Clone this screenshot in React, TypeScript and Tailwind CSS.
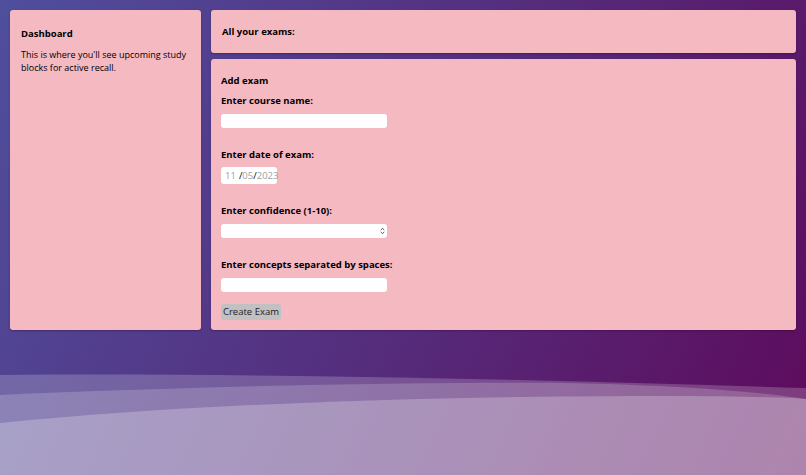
import type { ReactNode } from 'react'

const font = { fontFamily: '"Open Sans", "Liberation Sans", sans-serif' }

function Card({ children, className = '' }: { children: ReactNode; className?: string }) {
  return (
    <div className={`rounded-[3px] bg-[#f5b9c2] shadow-[0_1px_2px_rgba(40,0,40,0.35)] ${className}`}>
      {children}
    </div>
  )
}

function Label({ children, className = '' }: { children: ReactNode; className?: string }) {
  return <p className={`text-[9.5px] font-bold leading-[13px] text-black ${className}`}>{children}</p>
}

function TextBox({ className = '' }: { className?: string }) {
  return <input type="text" className={`block h-[14px] w-[166px] rounded-[3px] border-0 bg-white outline-none ${className}`} />
}

function Waves() {
  return (
    <svg className="absolute inset-x-0 bottom-0 h-[110px] w-full" viewBox="0 365 806 110" preserveAspectRatio="none">
      <path d="M0,375 C250,373 520,379 806,388 L806,475 L0,475 Z" fill="rgba(255,255,255,0.2)" />
      <path d="M0,395 C200,386 420,382 560,383 C680,385 760,392 806,399 L806,475 L0,475 Z" fill="rgba(255,255,255,0.18)" />
      <path d="M0,423 C150,408 320,400 520,397 C680,395 760,396 806,399 L806,475 L0,475 Z" fill="rgba(255,255,255,0.24)" />
    </svg>
  )
}

export default function App() {
  return (
    <div
      style={font}
      className="relative h-[475px] w-full overflow-hidden bg-[linear-gradient(115deg,#4f4f9d_0%,#552e7e_50%,#5e0a5b_100%)]"
    >
      <Waves />
      <div className="relative flex gap-[10px] p-[10px]">
        <Card className="h-[320px] w-[191px] shrink-0 px-[11px] pt-[17px]">
          <Label>Dashboard</Label>
          <p className="mt-[8px] text-[9px] leading-[13px] text-black">
            This is where you'll see upcoming study blocks for active recall.
          </p>
        </Card>
        <div className="flex flex-1 flex-col gap-[6px]">
          <Card className="h-[43px] px-[11px] pt-[15px]">
            <Label>All your exams:</Label>
          </Card>
          <Card className="h-[271px] px-[10px] pt-[15px]">
            <Label>Add exam</Label>
            <Label className="mt-[7px]">Enter course name:</Label>
            <TextBox className="mt-[7px]" />

            <Label className="mt-[20px]">Enter date of exam:</Label>
            <div className="mt-[6px] flex h-[17px] w-[56px] items-center rounded-[3px] bg-white pl-[4px] text-[9.5px] leading-none">
              <span className="text-[#a0a0a0]">11</span>
              <span className="ml-[3px] text-black">/</span>
              <span className="text-[#a0a0a0]">05</span>
              <span className="text-black">/</span>
              <span className="text-[#a0a0a0]">2023</span>
            </div>

            <Label className="mt-[20px]">Enter confidence (1-10):</Label>
            <div className="relative mt-[7px] w-[166px]">
              <TextBox />
              <svg className="absolute right-[2px] top-[3px] h-[8px] w-[5px]" viewBox="0 0 5 8">
                <path d="M0.8,3.2 L2.5,1.2 L4.2,3.2" fill="none" stroke="#555" strokeWidth="0.9" />
                <path d="M0.8,4.8 L2.5,6.8 L4.2,4.8" fill="none" stroke="#555" strokeWidth="0.9" />
              </svg>
            </div>

            <Label className="mt-[20px]">Enter concepts separated by spaces:</Label>
            <TextBox className="mt-[7px]" />

            <button className="mt-[12px] block h-[16px] w-[60px] rounded-[3px] bg-[#c2c0c0] text-[9.5px] leading-none text-[#222]">
              Create Exam
            </button>
          </Card>
        </div>
      </div>
    </div>
  )
}
